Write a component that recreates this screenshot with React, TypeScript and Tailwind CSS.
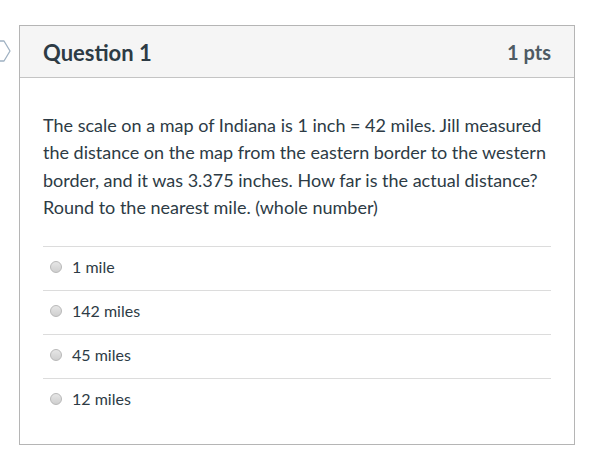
import React from "react";

const answers = ["1 mile", "142 miles", "45 miles", "12 miles"];

export default function App() {
  return (
    <div className="relative w-[615px] h-[461px] bg-white overflow-hidden" style={{ fontFamily: "Lato, 'Open Sans', sans-serif" }}>
      <svg className="absolute left-0 top-[40px]" width="12" height="22" viewBox="0 0 12 22">
        <path d="M-4 1 L4 1 L10 11 L4 21 L-4 21" fill="none" stroke="#9fb1c2" strokeWidth="1.3" strokeLinejoin="round" />
      </svg>
      <div className="ml-[19px] mt-[25px] w-[556px] h-[420px] border border-[#b5b5b5] flex flex-col">
        <div className="h-[52px] bg-[#f5f5f5] border-b border-[#c4c4c4] flex items-center justify-between pl-[23px] pr-[23px] pt-[1px]">
          <span className="text-[22px] font-bold text-[#2d3b45]">Question 1</span>
          <span className="text-[20px] font-bold text-[#4e5a63]">1 pts</span>
        </div>
        <div className="px-[23px] pt-[34px]">
          <p className="text-[18px] leading-[27.3px] text-[#2d3b45]">
            The scale on a map of Indiana is 1 inch = 42 miles. Jill measured the distance on the map from the eastern border to the western border, and it was 3.375 inches. How far is the actual distance? Round to the nearest mile. (whole number)
          </p>
          <div className="mt-[25px]">
            {answers.map((a) => (
              <div key={a} className="h-[44px] border-t border-[#dcdcdc] flex items-center pb-[4px]">
                <span className="ml-[7px] w-[12px] h-[12px] rounded-full border border-[#b8b8b8] bg-gradient-to-b from-[#e6e6e6] to-[#cfcfcf]" />
                <span className="ml-[10px] text-[16px] text-[#2d3b45]">{a}</span>
              </div>
            ))}
          </div>
        </div>
      </div>
    </div>
  );
}
